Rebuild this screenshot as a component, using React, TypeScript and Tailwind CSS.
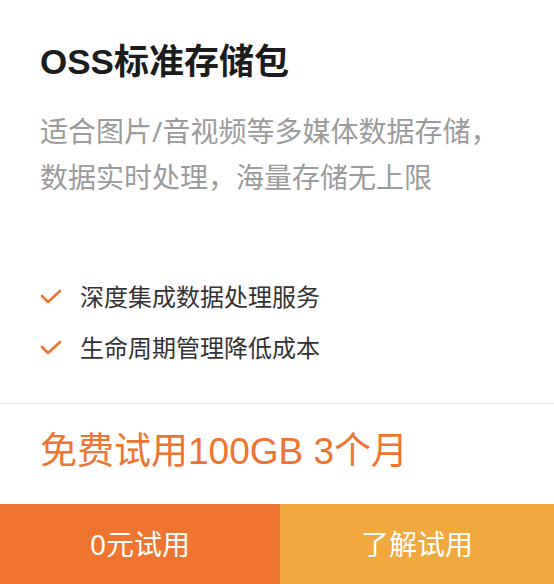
import React from 'react';

const features = ['深度集成数据处理服务', '生命周期管理降低成本'];

const Check: React.FC = () => (
  <svg width="22" height="16" viewBox="0 0 22 16" className="shrink-0">
    <polyline points="2,7 8,13 20,2" fill="none" stroke="#ee7430" strokeWidth="2.6" strokeLinecap="round" strokeLinejoin="round" />
  </svg>
);

export default function App() {
  return (
    <div className="w-[554px] h-[584px] bg-white flex flex-col font-['Noto_Sans','Noto_Sans_CJK_SC',sans-serif]">
      {/* 标题 + 描述 */}
      <div className="px-10 pt-10">
        <h1 className="text-[35px] leading-[44px] font-semibold text-[#1c1c1c] font-['Liberation_Sans','Noto_Sans_CJK_SC',sans-serif]">
          OSS标准存储包
        </h1>
        <p className="mt-6 text-[28px] leading-[46px] text-[#9b9b9b]">
          适合图片/音视频等多媒体数据存储，<br />
          数据实时处理，海量存储无上限
        </p>
      </div>

      {/* 特点 */}
      <ul className="px-10 mt-[79px] flex flex-col gap-[15px]">
        {features.map(f => (
          <li key={f} className="flex items-center gap-[18px] h-9">
            <Check />
            <span className="text-[24px] leading-9 text-[#333]">{f}</span>
          </li>
        ))}
      </ul>

      <div className="mt-[37px] border-t border-[#e8e8e8]" />

      <div className="px-10 pt-[23px] h-[100px]">
        <p className="text-[37px] leading-[50px] text-[#ee7430] font-['Liberation_Sans','Noto_Sans_CJK_SC',sans-serif]">
          免费试用100GB 3个月
        </p>
      </div>

      {/* 按钮 */}
      <div className="flex h-20">
        <button className="w-[280px] bg-[#ee7430] text-white text-[28px]">0元试用</button>
        <button className="flex-1 bg-[#f1a83c] text-white text-[28px]">了解试用</button>
      </div>
    </div>
  );
}
